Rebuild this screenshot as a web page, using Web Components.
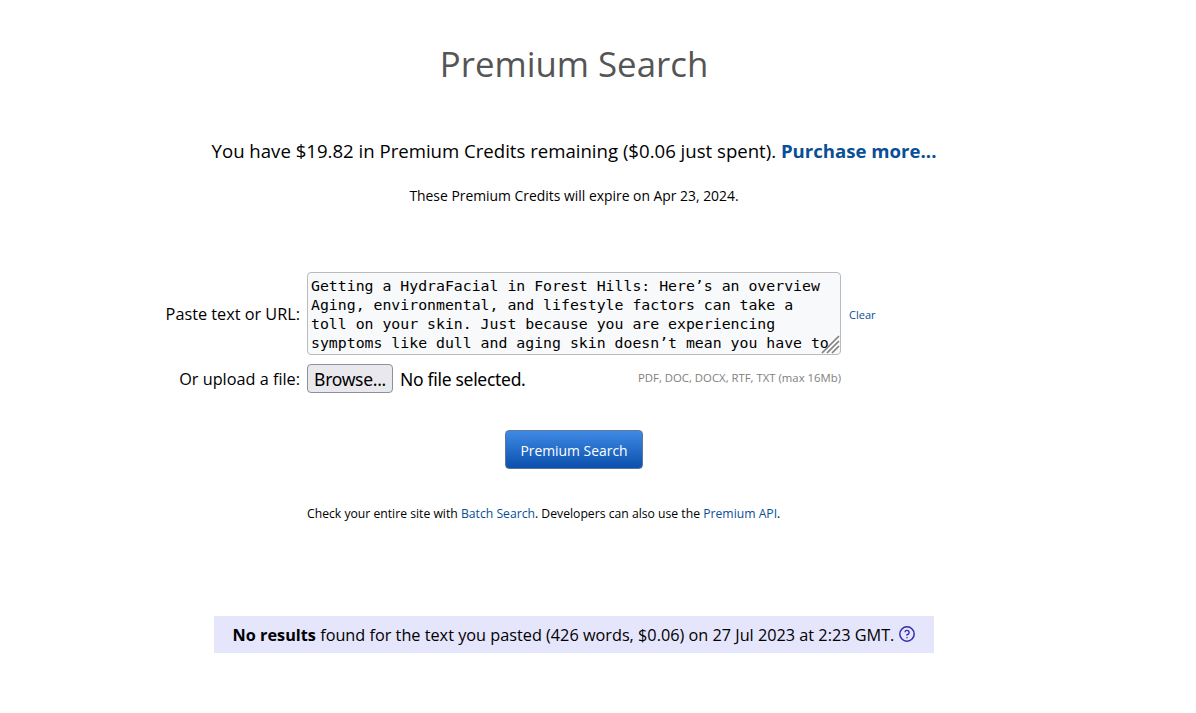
<!DOCTYPE html>
<html>
<head>
<meta charset="utf-8">
<title>Premium Search</title>
<style>
  html, body { margin: 0; padding: 0; background: #fff; }
  body { width: 1148px; font-family: "Open Sans", "Noto Sans", sans-serif; color: #000; }
</style>
</head>
<body>
<premium-page></premium-page>

<template id="credits-tpl">
  <style>
    :host { display: block; text-align: center; }
    .main { margin: 0; font-size: 18.6px; line-height: 24px; }
    .main a { color: #0a4e96; font-weight: 700; text-decoration: none; }
    .expire { margin: 23px 0 0; font-size: 13.9px; line-height: 20px; }
  </style>
  <p class="main">You have $19.82 in Premium Credits remaining ($0.06 just spent). <a href="#">Purchase more...</a></p>
  <p class="expire">These Premium Credits will expire on Apr 23, 2024.</p>
</template>

<template id="form-tpl">
  <style>
    :host { display: grid; grid-template-columns: 300px 534px auto; column-gap: 7px; align-items: center; }
    label { text-align: right; font-size: 16.25px; line-height: 22px; }
    .paste { height: 83px; position: relative; }
    textarea {
      display: block; box-sizing: border-box; width: 100%; height: 100%; margin: 0;
      padding: 3px 3px 0; border: 1px solid #bbb; border-radius: 4px; background: #f8f9fa; color: #000;
      font: 14.83px/19px "DejaVu Sans Mono", monospace; resize: none; overflow: hidden; outline: none;
    }
    .grip { position: absolute; right: 1px; bottom: 1px; width: 19px; height: 19px; }
    .clear { margin: 2px 0 0 1px; font-size: 11px; color: #0a4e96; text-decoration: none; }
    .file { display: flex; align-items: center; justify-content: space-between; margin-top: 9px; height: 29px; }
    .pick { display: flex; align-items: center; gap: 7px; font: 17.5px "Noto Sans", sans-serif; letter-spacing: -0.3px; }
    button {
      box-sizing: border-box; width: 86px; height: 29px; padding: 0; font: 17.5px "Noto Sans", sans-serif; letter-spacing: -0.3px; color: #000;
      background: #e9e9ed; border: 1px solid #8f8f9d; border-radius: 4px;
    }
    .types { margin-top: -2px; font-size: 11.35px; color: #808080; }
    .file-label { margin-top: 9px; }
  </style>
  <label>Paste text or URL:</label>
  <div class="paste">
    <textarea spellcheck="false">Getting a HydraFacial in Forest Hills: Here’s an overview
Aging, environmental, and lifestyle factors can take a toll on your skin. Just because you are experiencing symptoms like dull and aging skin doesn’t mean you have to live with it.</textarea>
    <svg class="grip" viewBox="0 0 19 19" fill="none" stroke="#808080" stroke-width="1.7">
      <path d="M1 18 18 1M6 18 18 6M11 18l7-7"/>
    </svg>
  </div>
  <a class="clear" href="#">Clear</a>
  <label class="file-label">Or upload a file:</label>
  <div class="file">
    <div class="pick"><button type="button">Browse...</button><span>No file selected.</span></div>
    <span class="types">PDF, DOC, DOCX, RTF, TXT (max 16Mb)</span>
  </div>
</template>

<template id="button-tpl">
  <style>
    :host { display: flex; justify-content: center; }
    button {
      box-sizing: border-box; width: 138px; height: 39px; padding: 1px 0 0;
      font: 13.9px "Open Sans", sans-serif; color: #fff;
      background: linear-gradient(#3f8ae6, #0a50ac);
      border: 1px solid #5d7897; border-radius: 4px;
    }
  </style>
  <button type="button"><slot></slot></button>
</template>

<template id="result-tpl">
  <style>
    :host { display: block; width: 720px; margin: 0 auto; box-sizing: border-box; height: 37px; background: #e5e5fc; }
    .line { display: flex; align-items: center; justify-content: center; gap: 5px; height: 100%; font-size: 16.25px; }
    svg { width: 16px; height: 16px; flex: none; margin-top: -2px; }
  </style>
  <div class="line">
    <span><slot></slot></span>
    <svg viewBox="0 0 16 16" fill="none" stroke="#2f2fa8" stroke-width="1.5">
      <circle cx="8" cy="8" r="7.2"/>
      <path d="M5.9 6.3A2.1 2.1 0 1 1 8 8.6V9.8M8 11v1.2" stroke-width="1.3"/>
    </svg>
  </div>
</template>

<template id="page-tpl">
  <style>
    :host { display: block; }
    h1 { margin: 0; padding-top: 39px; font-size: 34.8px; line-height: 50px; font-weight: 400; color: #555; text-align: center; }
    premium-credits { margin-top: 50px; }
    premium-form { margin-top: 66px; }
    premium-button { margin-top: 37px; }
    .more { margin: 36px 0 0 307px; font-size: 12.2px; line-height: 17px; }
    .more a { color: #0a4e96; text-decoration: none; }
    premium-result { margin-top: 94px; }
  </style>
  <h1>Premium Search</h1>
  <premium-credits></premium-credits>
  <premium-form></premium-form>
  <premium-button>Premium Search</premium-button>
  <p class="more">Check your entire site with <a href="#">Batch Search</a>. Developers can also use the <a href="#">Premium API</a>.</p>
  <premium-result><b>No results</b> found for the text you pasted (426 words, $0.06) on 27 Jul 2023 at 2:23 GMT.</premium-result>
</template>

<script>
  // every element just clones its template into an open shadow root
  function define(name, tplId) {
    customElements.define(name, class extends HTMLElement {
      constructor() {
        super();
        const shadow = this.attachShadow({ mode: 'open' });
        shadow.appendChild(document.getElementById(tplId).content.cloneNode(true));
      }
    });
  }
  define('premium-credits', 'credits-tpl');
  define('premium-form', 'form-tpl');
  define('premium-button', 'button-tpl');
  define('premium-result', 'result-tpl');
  define('premium-page', 'page-tpl');
</script>
</body>
</html>
